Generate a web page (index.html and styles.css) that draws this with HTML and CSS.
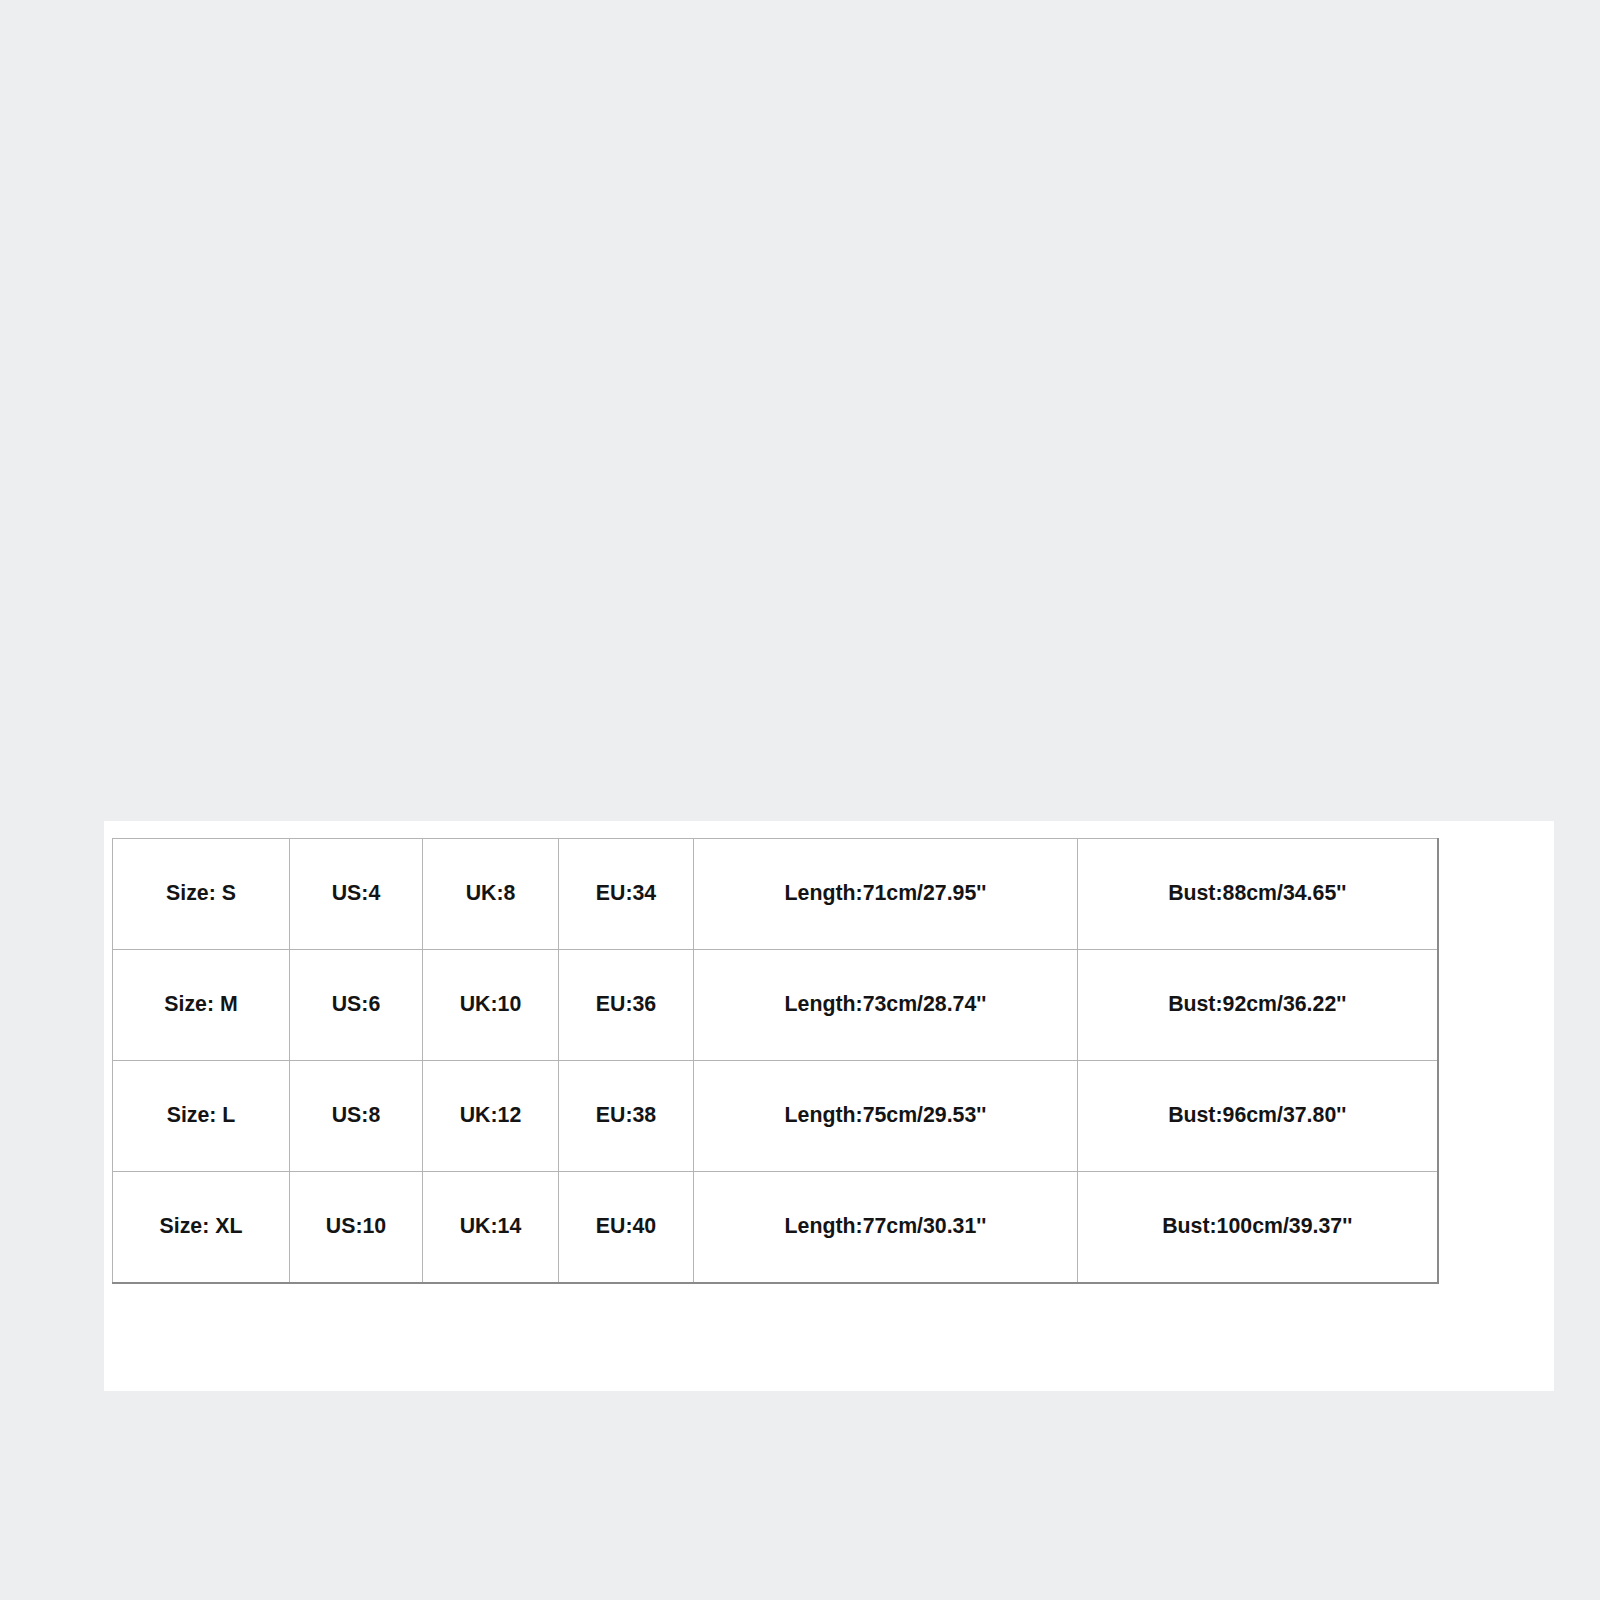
FILE: index.html
```html
<!DOCTYPE html>
<html>
<head>
<meta charset="utf-8">
<link rel="stylesheet" href="styles.css">
</head>
<body>
<div class="panel">
  <table class="sizes">
    <colgroup>
      <col class="c1"><col class="c2"><col class="c3"><col class="c4"><col class="c5"><col class="c6">
    </colgroup>
    <tr>
      <td>Size: S</td><td>US:4</td><td>UK:8</td><td>EU:34</td><td>Length:71cm/27.95''</td><td>Bust:88cm/34.65''</td>
    </tr>
    <tr>
      <td>Size: M</td><td>US:6</td><td>UK:10</td><td>EU:36</td><td>Length:73cm/28.74''</td><td>Bust:92cm/36.22''</td>
    </tr>
    <tr>
      <td>Size: L</td><td>US:8</td><td>UK:12</td><td>EU:38</td><td>Length:75cm/29.53''</td><td>Bust:96cm/37.80''</td>
    </tr>
    <tr>
      <td>Size: XL</td><td>US:10</td><td>UK:14</td><td>EU:40</td><td>Length:77cm/30.31''</td><td>Bust:100cm/39.37''</td>
    </tr>
  </table>
</div>
</body>
</html>
```
FILE: styles.css
```css
html, body {
  margin: 0;
  padding: 0;
  background: #edeef0;
}
body {
  padding-top: 821px;
  padding-left: 104px;
  height: 1600px;
  box-sizing: border-box;
}
.panel {
  width: 1450px;
  height: 570px;
  background: #ffffff;
  padding: 17px 0 0 8px;
  box-sizing: border-box;
}
.sizes {
  border-collapse: collapse;
  table-layout: fixed;
  width: 1325px;
  border-left: 1px solid #a8a8a8;
  border-top: 1px solid #a8a8a8;
  border-right: 2px solid #8a8a8a;
  border-bottom: 2px solid #8a8a8a;
}
.c1 { width: 177px; }
.c2 { width: 133px; }
.c3 { width: 136px; }
.c4 { width: 135px; }
.c5 { width: 384px; }
.c6 { width: 360px; }
.sizes td {
  border: 1px solid #b4b4b4;
  height: 108px;
  padding: 0 0 2px 0;
  text-align: center;
  vertical-align: middle;
  font-family: "Liberation Sans", Arial, sans-serif;
  font-weight: 700;
  font-size: 21.3px;
  color: #141414;
}
```
